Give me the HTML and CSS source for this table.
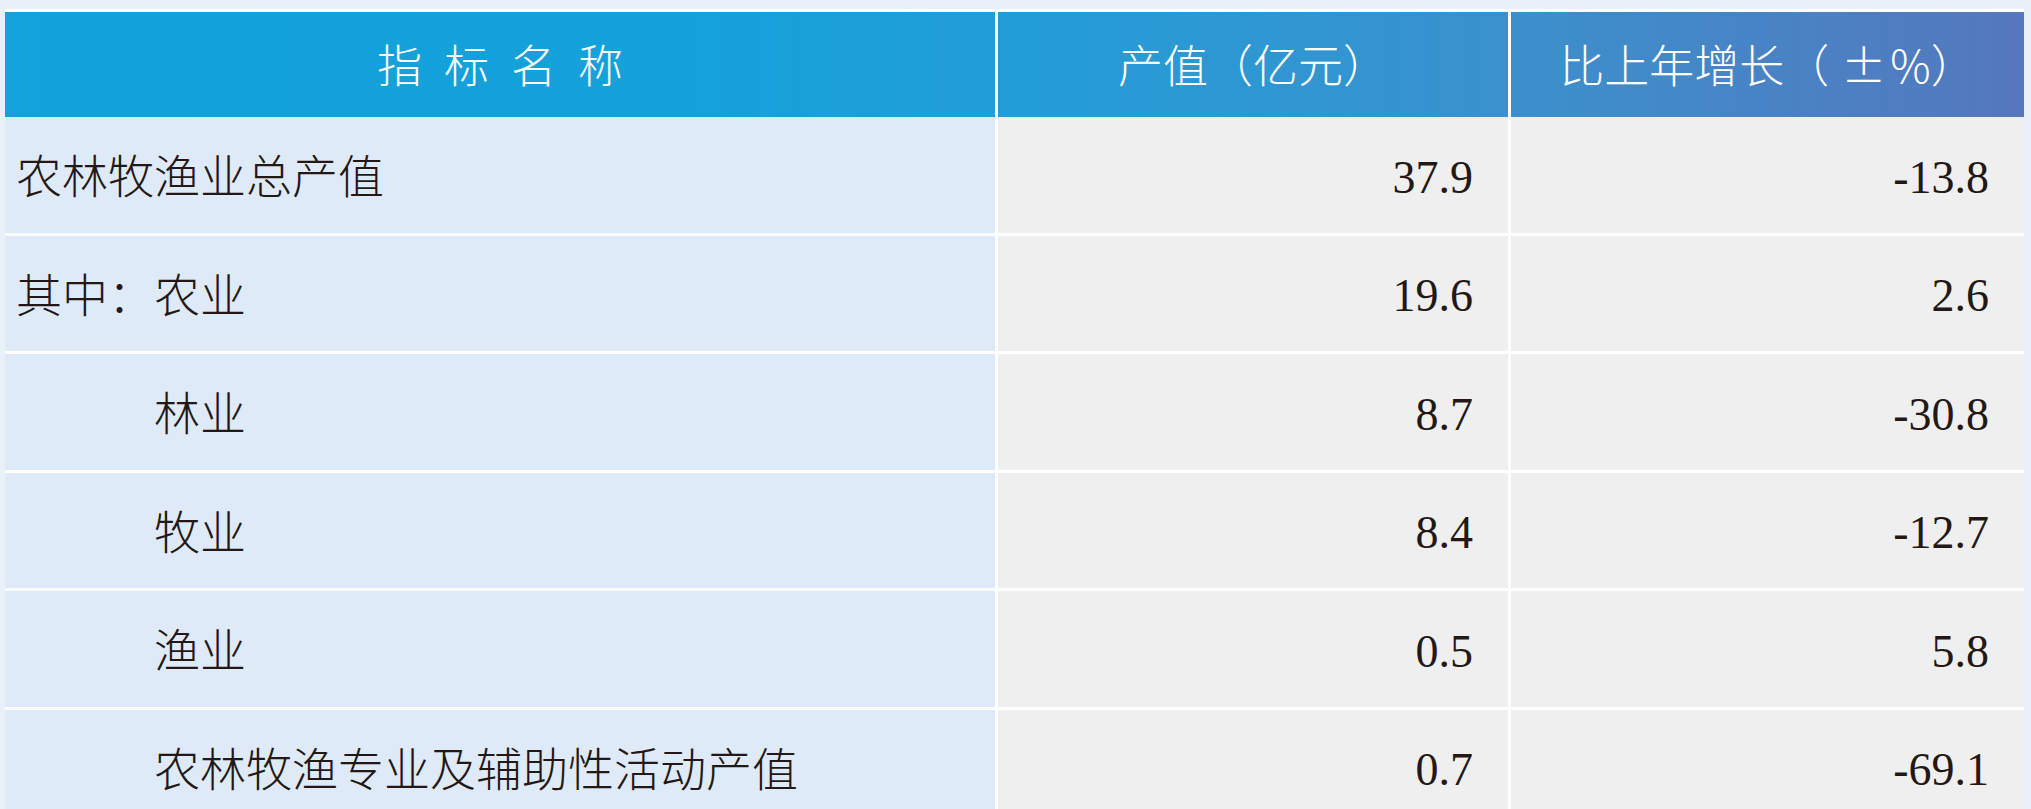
FILE: index.html
```html
<!DOCTYPE html>
<html lang="zh-CN">
<head>
<meta charset="utf-8">
<title>农林牧渔业总产值</title>
<link rel="stylesheet" href="styles.css">
</head>
<body>
<div class="sheet">
  <div class="head">
    <div class="hcell"><span class="spaced">指标名称</span></div>
    <div class="hcell div">产值（亿元）</div>
    <div class="hcell div">比上年增长（<span class="pm">±</span>%）</div>
  </div>
  <div class="rows">
    <div class="name">农林牧渔业总产值</div>
    <div class="num">37.9</div>
    <div class="num">-13.8</div>

    <div class="name">其中：农业</div>
    <div class="num">19.6</div>
    <div class="num">2.6</div>

    <div class="name indent">林业</div>
    <div class="num">8.7</div>
    <div class="num">-30.8</div>

    <div class="name indent">牧业</div>
    <div class="num">8.4</div>
    <div class="num">-12.7</div>

    <div class="name indent">渔业</div>
    <div class="num">0.5</div>
    <div class="num">5.8</div>

    <div class="name indent">农林牧渔专业及辅助性活动产值</div>
    <div class="num">0.7</div>
    <div class="num">-69.1</div>
  </div>
</div>
</body>
</html>
```

FILE: styles.css
```css
html, body {
  margin: 0;
  padding: 0;
  overflow: hidden;
  background: #e8f0fa;
}

body {
  width: 2031px;
  height: 809px;
}

.sheet {
  margin: 9px 7px 0 5px;
  width: 2019px;
  border-top: 3px solid #ffffff;
  font-family: "Noto Sans CJK SC", "Noto Sans", sans-serif;
}

.head {
  display: grid;
  grid-template-columns: 990px 513px 516px;
  height: 105px;
  background: linear-gradient(90deg, #13a2db 0%, #15a1da 35%, #229dd8 50%, #3a91cd 74%, #5577bd 100%);
  color: #ffffff;
  font-size: 45px;
  font-weight: 300;
}

.hcell {
  display: flex;
  align-items: center;
  justify-content: center;
  padding-bottom: 2px;
  white-space: nowrap;
}

.hcell.div {
  border-left: 3px solid #ffffff;
}

.spaced {
  letter-spacing: 22px;
  margin-right: -22px;
}

.pm {
  margin-left: 12px;
  margin-right: 4px;
}

.rows {
  display: grid;
  grid-template-columns: 990px 510px 513px;
  grid-auto-rows: 115.5px;
  gap: 3px;
  background: #ffffff;
}

.name {
  display: flex;
  align-items: center;
  background: #deeaf8;
  color: #231815;
  font-size: 46px;
  font-weight: 300;
  padding-left: 11px;
  padding-bottom: 3px;
  white-space: nowrap;
}

.name.indent {
  padding-left: 149px;
}

.num {
  display: flex;
  align-items: center;
  justify-content: flex-end;
  background: #efefef;
  color: #231815;
  font-family: "Liberation Serif", "Times New Roman", serif;
  font-size: 46px;
  padding-right: 35px;
  padding-top: 5px;
}
```
